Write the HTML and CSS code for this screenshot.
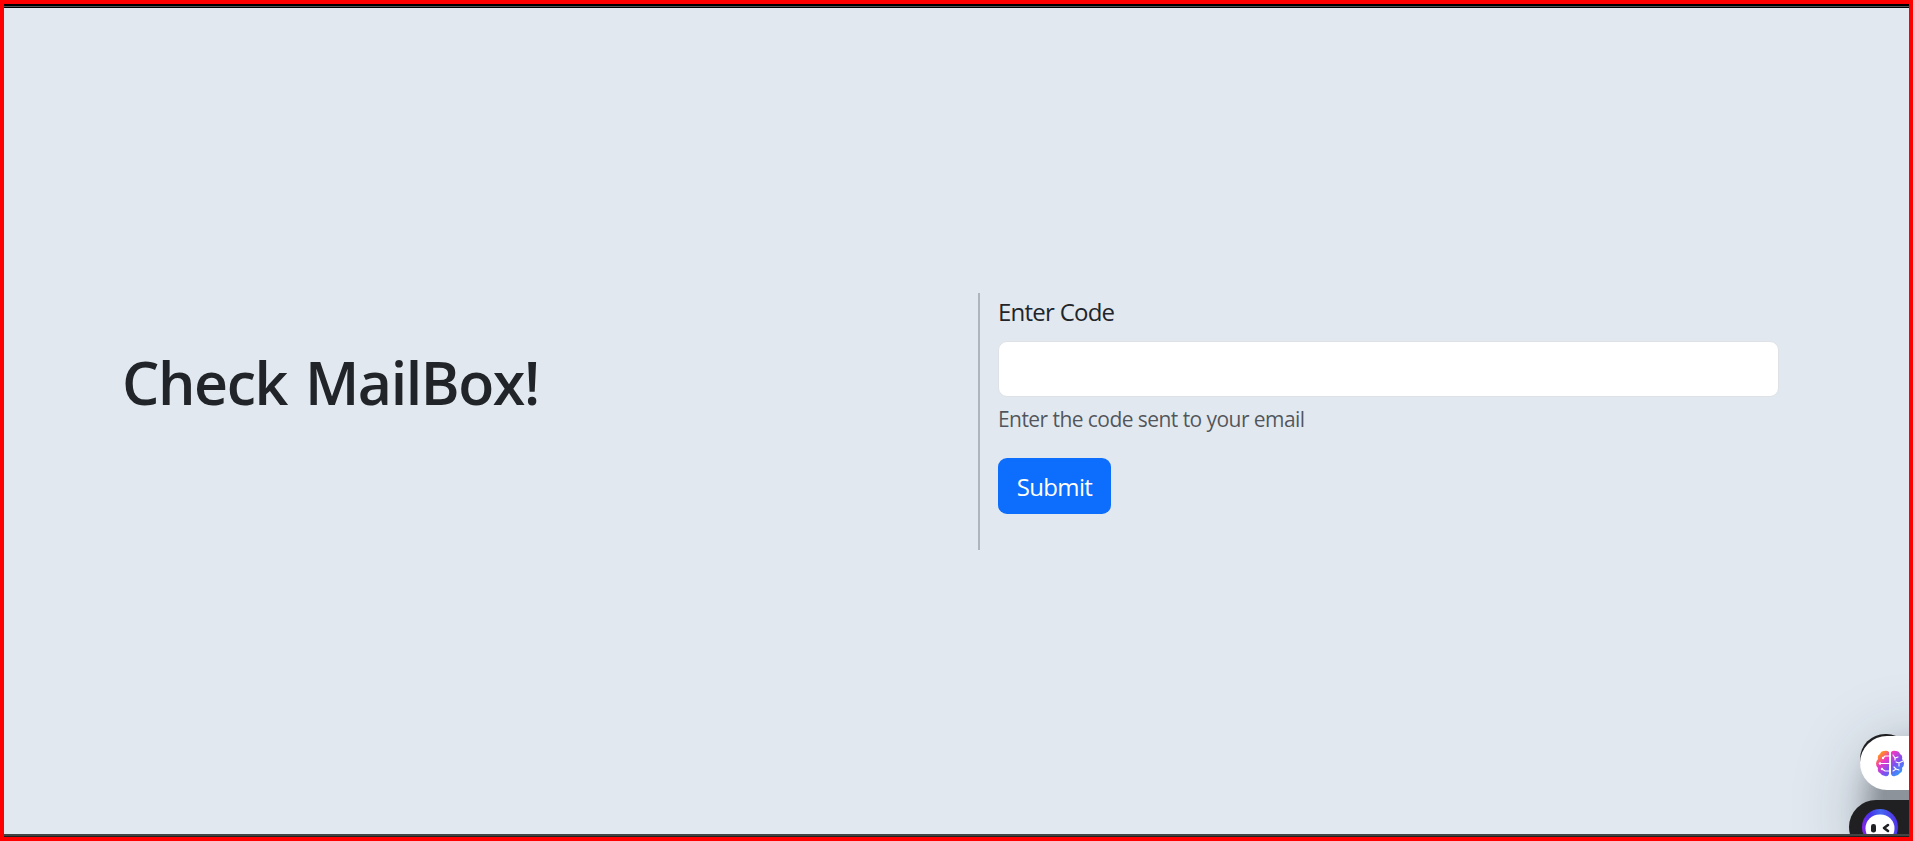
FILE: index.html
```html
<!DOCTYPE html>
<html lang="en">
<head>
<meta charset="utf-8">
<title>Check MailBox!</title>
<link rel="stylesheet" href="styles.css">
</head>
<body>
<div class="frame">
  <div class="topbar"></div>
  <main class="page">
    <section class="intro"><h1><span class="title">Check MailBox!</span></h1></section>
    <form class="code-form">
      <label for="code"><span class="label-text">Enter Code</span></label>
      <input id="code" type="text">
      <div class="hint"><span class="hint-text">Enter the code sent to your email</span></div>
      <button type="button"><span class="button-text">Submit</span></button>
    </form>
    <div class="widgets">
      <div class="glow"></div>
      <div class="pill pill-back"></div>
      <div class="pill pill-brain">
        <svg width="28" height="27" viewBox="0 0 28 27">
          <defs>
            <linearGradient id="brain" x1="0" y1="0" x2="1" y2="1">
              <stop offset="0" stop-color="#ffb000"/><stop offset=".18" stop-color="#ff8038"/>
              <stop offset=".34" stop-color="#ed38c6"/><stop offset=".6" stop-color="#7c50f0"/>
              <stop offset="1" stop-color="#16b4ff"/>
            </linearGradient>
          </defs>
          <path fill="url(#brain)" d="M13 2Q11 0 8 1Q5 1 4 4Q1 5 2 9Q0 11 0 13.500Q0 17 2 18Q1 22 4 23Q6 26 9 26Q12 27 13 24ZM15 2Q17 0 20 1Q23 1 24 4Q27 5 26 9Q28 11 28 13.500Q28 17 26 18Q27 22 24 23Q22 26 19 26Q16 27 15 24Z"/>
          <g fill="none" stroke="#fff" stroke-width="1.100" stroke-linecap="round">
            <path d="M13 6H9L7 8M4 13.500H13M6 19L9 21H13M17 5L19 8L22 7M19 8V10M27 11L23 13L20 12M23 13V16M17 21L20 19L23 20M20 19L18 17"/>
          </g>
          <g fill="#fff"><circle cx="7" cy="8" r="1.200"/><circle cx="4" cy="13.500" r="1.200"/><circle cx="6" cy="19" r="1.200"/></g>
        </svg>
      </div>
      <div class="pill pill-bot">
        <svg width="36" height="36" viewBox="0 0 36 36">
          <defs>
            <linearGradient id="ring" x1="0" y1=".6" x2="1" y2=".4">
              <stop offset="0" stop-color="#8a24e8"/><stop offset=".3" stop-color="#4633ea"/>
              <stop offset=".6" stop-color="#4567f0"/><stop offset="1" stop-color="#5130e8"/>
            </linearGradient>
          </defs>
          <circle cx="18" cy="18" r="18" fill="url(#ring)"/>
          <rect x="3.500" y="5.500" width="29" height="28" rx="14" fill="#fff"/>
          <rect x="9" y="15" width="5" height="8.500" rx="2.300" fill="#202022"/>
          <path d="M26 16L22 19L26 22" fill="none" stroke="#202022" stroke-width="2.600" stroke-linecap="round" stroke-linejoin="round"/>
        </svg>
      </div>
    </div>
  </main>
  <div class="bottombar"></div>
</div>
</body>
</html>
```
FILE: styles.css
```css
* { box-sizing: border-box; }
body { margin: 0; font-family: "Open Sans", "Noto Sans", sans-serif; color: #212529; }
.frame {
  width: 1913px; height: 841px; overflow: hidden;
  display: flex; flex-direction: column;
  border: 4px solid #f00;
  background: #e1e8f0;
}
.topbar { height: 4px; flex: none; background: linear-gradient(#000 2px, #555 2px, #555 3px, #000 3px); }
.page {
  flex: 1; min-height: 0; position: relative; overflow: hidden;
  display: grid; grid-template-columns: 974px 1fr; align-items: start;
  padding-top: 285px;
}
.bottombar { height: 3px; flex: none; background: linear-gradient(#444 2px, #222 2px); }
.intro { padding: 53px 0 0 118px; }
h1 { margin: 0; font-size: 59px; line-height: 72px; font-weight: 600; white-space: nowrap; }
.title { letter-spacing: -1.4px; word-spacing: 4px; }
.code-form {
  height: 257px; border-left: 2px solid #adb5bd;
  padding: 0 130px 0 18px;
  display: flex; flex-direction: column; align-items: flex-start;
}
label { height: 48px; font-size: 24px; line-height: 38px; white-space: nowrap; }
.label-text { letter-spacing: -.75px; }
input { width: 781px; height: 56px; flex: none; border: 1px solid #dee2e6; border-radius: 9px; background: #fff; padding: 9px 18px; font: inherit; font-size: 24px; }
.hint { height: 61px; padding-top: 5px; font-size: 21px; line-height: 34px; color: rgba(33,37,41,.75); white-space: nowrap; }
.hint-text { letter-spacing: -.56px; }
button { width: 113px; height: 56px; flex: none; border: 0; border-radius: 9px; padding: 1px 0 0; background: #0d6efd; color: #fff; font: 24px/36px "Open Sans", sans-serif; }
.button-text { letter-spacing: -.65px; }
.widgets { position: absolute; right: 0; bottom: 0; width: 60px; height: 100px; }
.pill { position: absolute; right: 0; }
.pill-back { top: 0; width: 49px; height: 50px; border-radius: 27px 24px 0 27px; background: #202022; }
.pill-brain { top: 2px; width: 49px; height: 54px; border-radius: 27px 0 0 27px; background: #fff; padding: 14px 0 0 16px; }
.pill-bot { top: 66px; width: 60px; height: 54px; border-radius: 27px 0 0 27px; background: #202022; padding: 9px 0 0 13px; }
.pill svg { display: block; }
.glow { position: absolute; left: 34px; top: 28px; width: 70px; height: 100px; border-radius: 30px; box-shadow: 0 0 70px 20px rgba(30,38,48,.25), 0 0 26px 14px rgba(20,25,30,.35); background: rgba(40,45,50,.45); }
```
